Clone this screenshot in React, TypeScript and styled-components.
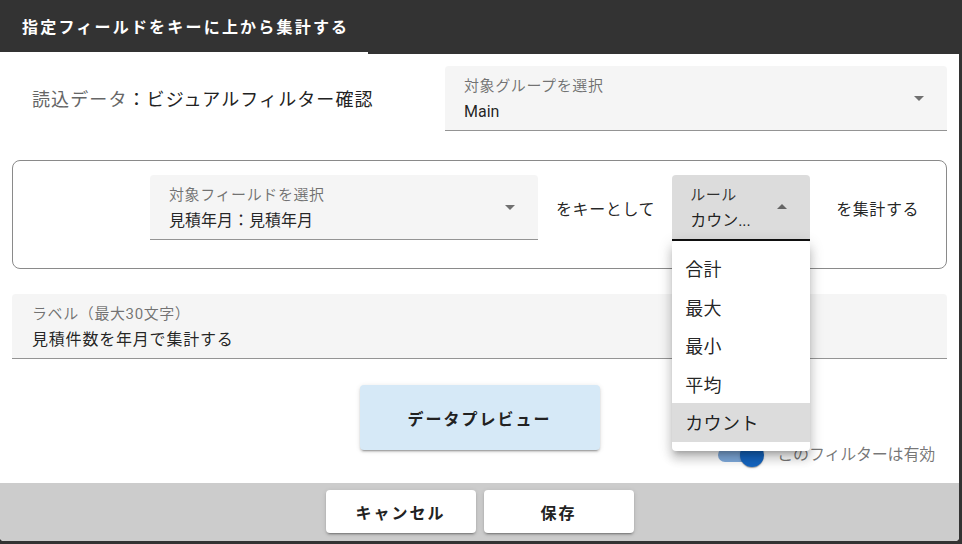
import React from 'react'
import styled, { createGlobalStyle } from 'styled-components'

const GlobalStyle = createGlobalStyle`
  html, body {
    margin: 0;
    padding: 0;
    background: #333333;
  }
  body {
    font-family: Roboto, "Noto Sans CJK JP", sans-serif;
    color: rgba(0, 0, 0, 0.87);
  }
`

const Dialog = styled.div`
  width: 959px;
  height: 541px;
  background: #ffffff;
  border-radius: 0 0 4px 4px;
  display: flex;
  flex-direction: column;
  overflow: hidden;
`

const Header = styled.div`
  height: 54px;
  background: #333333;
  display: flex;
  flex-shrink: 0;
`

const Tab = styled.div`
  width: 368px;
  box-sizing: border-box;
  padding: 0 0 0 22px;
  display: flex;
  align-items: center;
  color: #ffffff;
  font-size: 16px;
  font-weight: 700;
  letter-spacing: 2.2px;
  border-bottom: 2px solid #ffffff;
`

const Content = styled.div`
  flex: 1;
  padding: 12px 12px 0;
  display: flex;
  flex-direction: column;
`

const SourceRow = styled.div`
  display: grid;
  grid-template-columns: 433px 1fr;
  align-items: center;
`

const SourceText = styled.div`
  padding-left: 20px;
  font-size: 18px;
  letter-spacing: 1.1px;
  color: #222222;
  padding-bottom: 1px;
`

const Muted = styled.span`
  color: #666666;
`

const SelectBox = styled.div<{ $width?: number; $focused?: boolean }>`
  position: relative;
  box-sizing: border-box;
  width: ${(p) => (p.$width ? `${p.$width}px` : 'auto')};
  height: ${(p) => (p.$focused ? 66 : 65)}px;
  padding: 11px 52px 0 19px;
  background: ${(p) => (p.$focused ? '#dcdcdc' : '#f5f5f5')};
  border-radius: 4px 4px 0 0;
  border-bottom: ${(p) => (p.$focused ? '2px solid #111111' : '1px solid #949494')};
  flex-shrink: 0;
`

const FieldLabel = styled.div<{ $focused?: boolean }>`
  font-size: 15px;
  line-height: 18px;
  letter-spacing: 0.6px;
  color: ${(p) => (p.$focused ? 'rgba(0, 0, 0, 0.78)' : 'rgba(0, 0, 0, 0.55)')};
`

const FieldValue = styled.div<{ $spacing?: number }>`
  margin-top: 7px;
  font-size: 16px;
  line-height: 19px;
  letter-spacing: ${(p) => p.$spacing ?? 0}px;
  color: rgba(0, 0, 0, 0.87);
  white-space: nowrap;
`

const Arrow = styled.svg`
  position: absolute;
  right: 16px;
  top: 50%;
  width: 24px;
  height: 24px;
  margin-top: -12px;
  fill: rgba(0, 0, 0, 0.54);
`

const RuleBox = styled.div`
  margin-top: 29px;
  height: 109px;
  box-sizing: border-box;
  border: 1px solid #8a8a8a;
  border-radius: 8px;
  padding: 14px 0 0 137px;
  display: flex;
  align-items: flex-start;
`

const InlineText = styled.div<{ $gapLeft: number }>`
  margin-left: ${(p) => p.$gapLeft}px;
  height: 66px;
  display: flex;
  align-items: center;
  font-size: 16px;
  letter-spacing: 0.6px;
  color: rgba(0, 0, 0, 0.87);
  white-space: nowrap;
`

const RuleSelect = styled(SelectBox)`
  margin-left: 17px;
  padding-left: 18px;
`

const Menu = styled.ul`
  position: absolute;
  left: 0;
  top: calc(100% + 2px);
  width: 138px;
  margin: 0;
  padding: 8px 0 9px;
  list-style: none;
  background: #ffffff;
  border-radius: 4px;
  box-shadow: 0 5px 5px -3px rgba(0, 0, 0, 0.2), 0 8px 10px 1px rgba(0, 0, 0, 0.14),
    0 3px 14px 2px rgba(0, 0, 0, 0.12);
  z-index: 10;
`

const MenuItem = styled.li<{ $selected?: boolean }>`
  height: 38.5px;
  display: flex;
  align-items: center;
  padding-left: 13px;
  font-size: 18px;
  letter-spacing: 0.5px;
  color: rgba(0, 0, 0, 0.87);
  background: ${(p) => (p.$selected ? '#dcdcdc' : 'transparent')};
`

const LabelField = styled(SelectBox)`
  margin-top: 25px;
  padding-left: 20px;
`

const PreviewRow = styled.div`
  margin-top: 26px;
  display: flex;
  justify-content: center;
`

const PreviewButton = styled.button`
  width: 240px;
  height: 65px;
  border: none;
  border-radius: 4px;
  background: #d6e9f7;
  box-shadow: 0 3px 1px -2px rgba(0, 0, 0, 0.2), 0 2px 2px 0 rgba(0, 0, 0, 0.14),
    0 1px 5px 0 rgba(0, 0, 0, 0.12);
  font-family: inherit;
  font-size: 16px;
  font-weight: 700;
  letter-spacing: 2px;
  color: #222222;
`

const SwitchRow = styled.div`
  margin-top: -7px;
  height: 24px;
  padding-right: 12px;
  display: flex;
  justify-content: flex-end;
  align-items: center;
  gap: 13px;
`

const SwitchRoot = styled.span`
  position: relative;
  width: 46px;
  height: 24px;
`

const Track = styled.span`
  position: absolute;
  left: 0;
  top: 5px;
  width: 34px;
  height: 14px;
  border-radius: 7px;
  background: #1565c0;
  opacity: 0.55;
`

const Thumb = styled.span`
  position: absolute;
  right: 0;
  top: 0;
  width: 24px;
  height: 24px;
  border-radius: 50%;
  background: #1565c0;
  box-shadow: 0 2px 1px -1px rgba(0, 0, 0, 0.2), 0 1px 1px 0 rgba(0, 0, 0, 0.14),
    0 1px 3px 0 rgba(0, 0, 0, 0.12);
`

const SwitchText = styled.span`
  font-size: 16px;
  letter-spacing: -0.2px;
  color: rgba(0, 0, 0, 0.55);
  padding-bottom: 4px;
`

const Footer = styled.div`
  height: 58px;
  flex-shrink: 0;
  background: #cccccc;
  display: flex;
  justify-content: center;
  align-items: flex-start;
  padding-top: 7px;
  box-sizing: border-box;
  gap: 8px;
`

const FooterButton = styled.button`
  width: 150px;
  height: 43px;
  border: none;
  border-radius: 4px;
  background: #ffffff;
  box-shadow: 0 3px 1px -2px rgba(0, 0, 0, 0.2), 0 2px 2px 0 rgba(0, 0, 0, 0.14),
    0 1px 5px 0 rgba(0, 0, 0, 0.12);
  font-family: inherit;
  font-size: 16px;
  font-weight: 700;
  letter-spacing: 2px;
  color: #222222;
`

const DropIcon: React.FC<{ up?: boolean }> = ({ up }) => (
  <Arrow viewBox="0 0 24 24">
    <path d={up ? 'M7 14l5-5 5 5z' : 'M7 10l5 5 5-5z'} />
  </Arrow>
)

const rules = ['合計', '最大', '最小', '平均', 'カウント']

export default function App() {
  return (
    <>
      <GlobalStyle />
      <Dialog>
        <Header>
          <Tab>指定フィールドをキーに上から集計する</Tab>
        </Header>
        <Content>
          <SourceRow>
            <SourceText>
              <Muted>読込データ</Muted>：ビジュアルフィルター確認
            </SourceText>
            <SelectBox>
              <FieldLabel>対象グループを選択</FieldLabel>
              <FieldValue>Main</FieldValue>
              <DropIcon />
            </SelectBox>
          </SourceRow>

          <RuleBox>
            <SelectBox $width={388}>
              <FieldLabel>対象フィールドを選択</FieldLabel>
              <FieldValue>見積年月：見積年月</FieldValue>
              <DropIcon />
            </SelectBox>
            <InlineText $gapLeft={18}>をキーとして</InlineText>
            <RuleSelect $width={138} $focused>
              <FieldLabel $focused>ルール</FieldLabel>
              <FieldValue>カウン...</FieldValue>
              <DropIcon up />
              <Menu>
                {rules.map((r) => (
                  <MenuItem key={r} $selected={r === 'カウント'}>
                    {r}
                  </MenuItem>
                ))}
              </Menu>
            </RuleSelect>
            <InlineText $gapLeft={26}>を集計する</InlineText>
          </RuleBox>

          <LabelField>
            <FieldLabel>ラベル（最大30文字）</FieldLabel>
            <FieldValue $spacing={0.8}>見積件数を年月で集計する</FieldValue>
          </LabelField>

          <PreviewRow>
            <PreviewButton>データプレビュー</PreviewButton>
          </PreviewRow>

          <SwitchRow>
            <SwitchRoot>
              <Track />
              <Thumb />
            </SwitchRoot>
            <SwitchText>このフィルターは有効</SwitchText>
          </SwitchRow>
        </Content>
        <Footer>
          <FooterButton>キャンセル</FooterButton>
          <FooterButton>保存</FooterButton>
        </Footer>
      </Dialog>
    </>
  )
}
